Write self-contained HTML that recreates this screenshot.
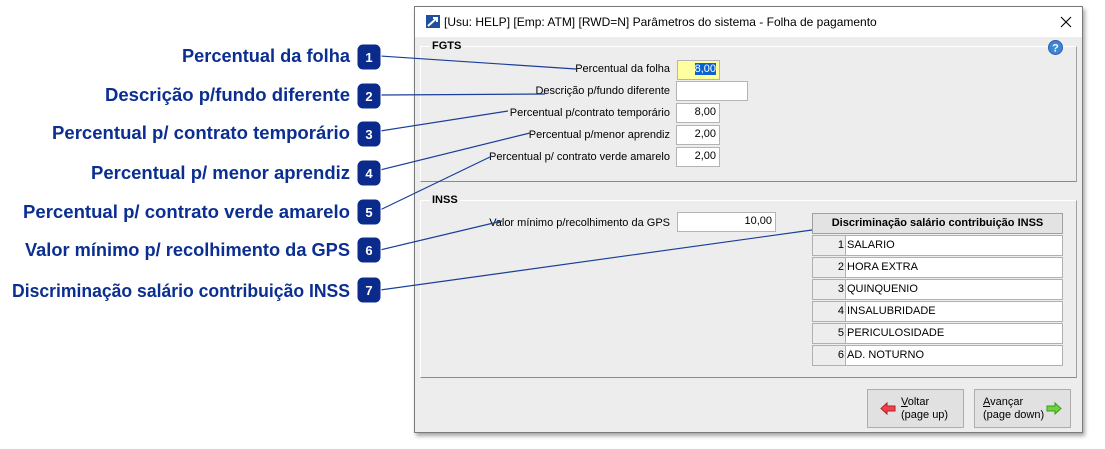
<!DOCTYPE html>
<html><head><meta charset="utf-8"><style>
*{margin:0;padding:0;box-sizing:border-box}
body{width:1105px;height:449px;background:#fff;position:relative;overflow:hidden;font-family:"Liberation Sans",sans-serif}
.a{position:absolute}
.win{left:414px;top:6px;width:669px;height:427px;border:1px solid #7a7a7a;background:#ededed;box-shadow:2px 3px 4px rgba(0,0,0,.35)}
.title{left:0;top:0;width:667px;height:30px;background:#fff;font-size:12px;color:#000}
.grp{border:1px solid #fff;border-bottom-color:#8a8a8a;border-right-color:#a0a0a0}
.gl{font-size:11px;font-weight:bold;background:#ededed;padding:0 2px}
.lbl{font-size:11px;color:#000;text-align:right;white-space:nowrap}
.in{background:#fff;border:1px solid #b4b4b4;font-size:11px;text-align:right;padding-right:3px;line-height:17px;height:20px}
.gh{background:#e3e3e3;border:1px solid #a0a0a0;font-size:11px;font-weight:bold;text-align:center;line-height:18px}
.ri{background:#ededed;border:1px solid #b0b0b0;font-size:11px;text-align:right;padding-right:1px;line-height:18px}
.rv{background:#fff;border:1px solid #b0b0b0;border-left:none;font-size:11px;line-height:18px;padding-left:1px}
.btn{background:#e1e1e1;border:1px solid #adadad;font-size:11px;line-height:13px}
</style></head><body>
<div class="a win">
 <div class="a title">
  <svg class="a" style="left:11px;top:8px" width="14" height="13"><rect width="14" height="13" fill="#1f4fa0"/><path d="M2 11 L11 3 M7 3 H11 V7" stroke="#fff" stroke-width="2" fill="none"/></svg>
  <div class="a" style="left:29px;top:8px">[Usu: HELP] [Emp: ATM] [RWD=N] Parâmetros do sistema - Folha de pagamento</div>
  <svg class="a" style="left:645px;top:9px" width="12" height="12"><path d="M1 1L11 11M11 1L1 11" stroke="#000" stroke-width="1.1"/></svg>
 </div>
 <div class="a grp" style="left:5px;top:39px;width:657px;height:136px"></div>
 <div class="a gl" style="left:15px;top:33px">FGTS</div>
 <svg class="a" style="left:633px;top:33px" width="15" height="15"><circle cx="7.5" cy="7.5" r="7" fill="#3d86d6" stroke="#2a5fa8"/><text x="7.5" y="11.5" font-size="11" font-weight="bold" fill="#fff" text-anchor="middle" font-family="Liberation Sans">?</text></svg>
 <div class="a lbl" style="right:412px;top:56px">Percentual da folha</div>
 <div class="a in" style="left:262px;top:53px;width:43px;background:#ffff9f"><span style="background:#0b63d1;color:#fff">8,00</span></div>
 <div class="a lbl" style="right:412px;top:78px">Descrição p/fundo diferente</div>
 <div class="a in" style="left:261px;top:74px;width:72px"></div>
 <div class="a lbl" style="right:412px;top:100px">Percentual p/contrato temporário</div>
 <div class="a in" style="left:261px;top:96px;width:44px">8,00</div>
 <div class="a lbl" style="right:412px;top:122px">Percentual p/menor aprendiz</div>
 <div class="a in" style="left:261px;top:118px;width:44px">2,00</div>
 <div class="a lbl" style="right:412px;top:144px">Percentual p/ contrato verde amarelo</div>
 <div class="a in" style="left:261px;top:140px;width:44px">2,00</div>

 <div class="a grp" style="left:5px;top:193px;width:657px;height:178px"></div>
 <div class="a gl" style="left:15px;top:187px">INSS</div>
 <div class="a lbl" style="right:412px;top:210px">Valor mínimo p/recolhimento da GPS</div>
 <div class="a in" style="left:262px;top:205px;width:99px">10,00</div>
 <div class="a gh" style="left:397px;top:206px;width:251px;height:21px">Discriminação salário contribuição INSS</div>
 <div class="a" style="left:397px;top:228px">
  <div class="a ri" style="left:0;top:0;width:34px;height:21px">1</div><div class="a rv" style="left:34px;top:0;width:217px;height:21px">SALARIO</div>
  <div class="a ri" style="left:0;top:22px;width:34px;height:21px">2</div><div class="a rv" style="left:34px;top:22px;width:217px;height:21px">HORA EXTRA</div>
  <div class="a ri" style="left:0;top:44px;width:34px;height:21px">3</div><div class="a rv" style="left:34px;top:44px;width:217px;height:21px">QUINQUENIO</div>
  <div class="a ri" style="left:0;top:66px;width:34px;height:21px">4</div><div class="a rv" style="left:34px;top:66px;width:217px;height:21px">INSALUBRIDADE</div>
  <div class="a ri" style="left:0;top:88px;width:34px;height:21px">5</div><div class="a rv" style="left:34px;top:88px;width:217px;height:21px">PERICULOSIDADE</div>
  <div class="a ri" style="left:0;top:110px;width:34px;height:21px">6</div><div class="a rv" style="left:34px;top:110px;width:217px;height:21px">AD. NOTURNO</div>
 </div>
 <div class="a btn" style="left:452px;top:382px;width:97px;height:39px">
  <svg class="a" style="left:12px;top:12px" width="16" height="13"><path d="M1 6.5L7 1V4H15V9H7V12Z" fill="#f0434a" stroke="#b02020"/></svg>
  <div class="a" style="left:33px;top:6px"><u>V</u>oltar<br>(page up)</div>
 </div>
 <div class="a btn" style="left:559px;top:382px;width:97px;height:39px">
  <div class="a" style="left:8px;top:6px"><u>A</u>vançar<br>(page down)</div>
  <svg class="a" style="left:71px;top:12px" width="16" height="13"><path d="M15 6.5L9 1V4H1V9H9V12Z" fill="#6fd23c" stroke="#3a9a20"/></svg>
 </div>
</div>
<svg class="a" style="left:0;top:0" width="1105" height="449">
 <g stroke="#1a3f9a" stroke-width="1.2" fill="none">
  <path d="M380 56L576 69"/><path d="M380 95L545 94"/><path d="M380 131L508 111"/>
  <path d="M380 170L530 133"/><path d="M380 210L492 156"/><path d="M380 250L502 221"/><path d="M380 290L812 230"/>
 </g>
 <g font-family="Liberation Sans" font-weight="bold" font-size="18" fill="#0b2f91" text-anchor="end">
  <text x="350" y="62" textLength="168" lengthAdjust="spacingAndGlyphs">Percentual da folha</text>
  <text x="350" y="101" textLength="245" lengthAdjust="spacingAndGlyphs">Descrição p/fundo diferente</text>
  <text x="350" y="139" textLength="298" lengthAdjust="spacingAndGlyphs">Percentual p/ contrato temporário</text>
  <text x="350" y="179" textLength="259" lengthAdjust="spacingAndGlyphs">Percentual p/ menor aprendiz</text>
  <text x="350" y="218" textLength="327" lengthAdjust="spacingAndGlyphs">Percentual p/ contrato verde amarelo</text>
  <text x="350" y="256" textLength="325" lengthAdjust="spacingAndGlyphs">Valor mínimo p/ recolhimento da GPS</text>
  <text x="350" y="297" textLength="338" lengthAdjust="spacingAndGlyphs">Discriminação salário contribuição INSS</text>
 </g>
 <g>
  <rect x="357" y="44" width="24" height="26" rx="6" fill="#0a2a8c" stroke="#fff"/><text x="369" y="62" fill="#fff" font-size="13" font-weight="bold" font-family="Liberation Sans" text-anchor="middle">1</text>
  <rect x="357" y="83" width="24" height="26" rx="6" fill="#0a2a8c" stroke="#fff"/><text x="369" y="101" fill="#fff" font-size="13" font-weight="bold" font-family="Liberation Sans" text-anchor="middle">2</text>
  <rect x="357" y="121" width="24" height="26" rx="6" fill="#0a2a8c" stroke="#fff"/><text x="369" y="139" fill="#fff" font-size="13" font-weight="bold" font-family="Liberation Sans" text-anchor="middle">3</text>
  <rect x="357" y="160" width="24" height="26" rx="6" fill="#0a2a8c" stroke="#fff"/><text x="369" y="178" fill="#fff" font-size="13" font-weight="bold" font-family="Liberation Sans" text-anchor="middle">4</text>
  <rect x="357" y="199" width="24" height="26" rx="6" fill="#0a2a8c" stroke="#fff"/><text x="369" y="217" fill="#fff" font-size="13" font-weight="bold" font-family="Liberation Sans" text-anchor="middle">5</text>
  <rect x="357" y="237" width="24" height="26" rx="6" fill="#0a2a8c" stroke="#fff"/><text x="369" y="255" fill="#fff" font-size="13" font-weight="bold" font-family="Liberation Sans" text-anchor="middle">6</text>
  <rect x="357" y="277" width="24" height="26" rx="6" fill="#0a2a8c" stroke="#fff"/><text x="369" y="295" fill="#fff" font-size="13" font-weight="bold" font-family="Liberation Sans" text-anchor="middle">7</text>
 </g>
</svg>
</body></html>
